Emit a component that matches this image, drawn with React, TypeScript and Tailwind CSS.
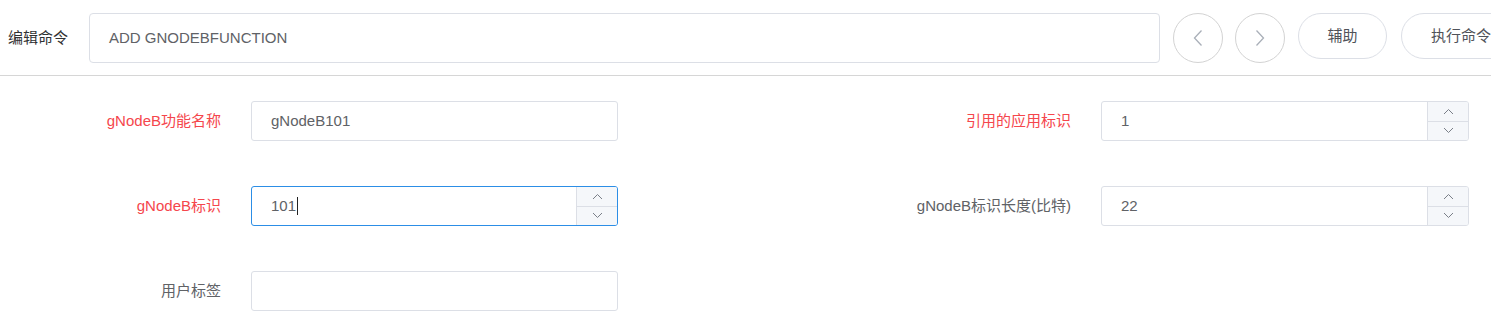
import React from "react";

const font = '"Liberation Sans", "Noto Sans CJK SC", sans-serif';

function Chevron({ dir }: { dir: "up" | "down" }) {
  return (
    <svg width="11" height="7" viewBox="0 0 11 7" fill="none">
      {dir === "up" ? (
        <path d="M1 6 L5.5 1.5 L10 6" stroke="#7a7f88" strokeWidth="1" />
      ) : (
        <path d="M1 1 L5.5 5.5 L10 1" stroke="#7a7f88" strokeWidth="1" />
      )}
    </svg>
  );
}

function Spinner() {
  return (
    <div className="flex w-[41px] shrink-0 flex-col border-l border-[#dcdfe6] bg-[#f5f7fa]">
      <div className="flex flex-1 items-center justify-center border-b border-[#dcdfe6]">
        <Chevron dir="up" />
      </div>
      <div className="flex flex-1 items-center justify-center">
        <Chevron dir="down" />
      </div>
    </div>
  );
}

function Field({
  label,
  required,
  value,
  number,
  focused,
  labelW,
  inputW,
}: {
  label: string;
  required?: boolean;
  value: string;
  number?: boolean;
  focused?: boolean;
  labelW: string;
  inputW: string;
}) {
  return (
    <div className="flex items-center">
      <div
        className={`${labelW} shrink-0 pr-[30px] text-right text-[15px] ${
          required ? "text-[#f5464c]" : "text-[#606266]"
        }`}
      >
        {label}
      </div>
      <div
        className={`${inputW} flex h-[40px] shrink-0 overflow-hidden rounded-[3px] border bg-white ${
          focused ? "border-[#2c8ee6]" : "border-[#dcdfe6]"
        }`}
      >
        <div className="flex flex-1 items-center pl-[19px] text-[15px] text-[#606266]">
          {value}
          {focused && <span className="ml-[1px] inline-block h-[18px] w-[1px] bg-[#222]" />}
        </div>
        {number && <Spinner />}
      </div>
    </div>
  );
}

export default function App() {
  return (
    <div className="h-[311px] w-[1491px] overflow-hidden bg-white" style={{ fontFamily: font }}>
      <div className="flex h-[76px] items-start overflow-hidden border-b border-[#d6d6d6] pt-[13px] pl-[8px]">
        <div className="flex h-[50px] w-[81px] shrink-0 items-center text-[15px] text-[#303133]">编辑命令</div>
        <div className="flex h-[50px] w-[1071px] shrink-0 items-center rounded-[4px] border border-[#dcdfe6] pl-[19px] text-[15px] text-[#606266]">
          ADD GNODEBFUNCTION
        </div>
        <button className="ml-[13px] flex h-[50px] w-[50px] shrink-0 items-center justify-center rounded-full border border-[#d3d3d3] bg-white">
          <svg width="10" height="18" viewBox="0 0 10 18" fill="none">
            <path d="M8.5 1.5 L1.5 9 L8.5 16.5" stroke="#a9afb8" strokeWidth="1.3" />
          </svg>
        </button>
        <button className="ml-[12px] flex h-[50px] w-[50px] shrink-0 items-center justify-center rounded-full border border-[#d3d3d3] bg-white">
          <svg width="10" height="18" viewBox="0 0 10 18" fill="none">
            <path d="M1.5 1.5 L8.5 9 L1.5 16.5" stroke="#a9afb8" strokeWidth="1.3" />
          </svg>
        </button>
        <button className="ml-[13px] flex h-[46px] w-[89px] shrink-0 items-center justify-center rounded-full border border-[#dcdfe6] bg-white text-[15px] text-[#505259]">
          辅助
        </button>
        <button className="ml-[14px] flex h-[46px] w-[120px] shrink-0 items-center justify-center rounded-full border border-[#dcdfe6] bg-white text-[15px] text-[#505259]">
          执行命令
        </button>
      </div>
      <div className="flex pt-[25px]">
        <div className="flex w-[745px] shrink-0 flex-col gap-[45px]">
          <Field label="gNodeB功能名称" required value="gNodeB101" labelW="w-[251px]" inputW="w-[367px]" />
          <Field label="gNodeB标识" required value="101" number focused labelW="w-[251px]" inputW="w-[367px]" />
          <Field label="用户标签" value="" labelW="w-[251px]" inputW="w-[367px]" />
        </div>
        <div className="flex flex-col gap-[45px]">
          <Field label="引用的应用标识" required value="1" number labelW="w-[356px]" inputW="w-[368px]" />
          <Field label="gNodeB标识长度(比特)" value="22" number labelW="w-[356px]" inputW="w-[368px]" />
        </div>
      </div>
    </div>
  );
}
